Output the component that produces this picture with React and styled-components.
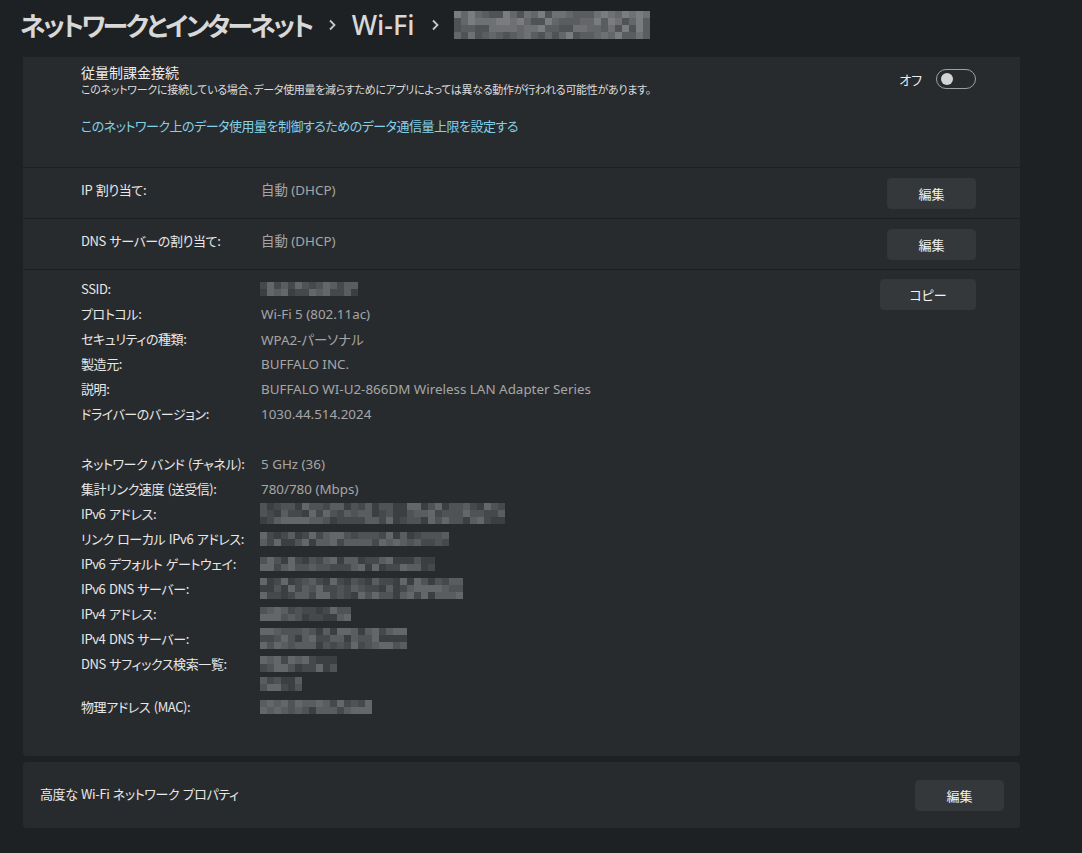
import React from "react"
import styled, { createGlobalStyle } from "styled-components"

const GlobalStyle = createGlobalStyle`
  html, body {
    margin: 0;
    padding: 0;
    background: #1e2124;
  }
  body {
    font-family: "Noto Sans CJK JP", "Noto Sans", sans-serif;
    font-feature-settings: "palt";
    color: #e6e6e6;
    -webkit-font-smoothing: antialiased;
  }
`

const Page = styled.div`
  width: 1082px;
  height: 853px;
  overflow: hidden;
  background: #1e2124;
`

const Header = styled.div`
  height: 57px;
  display: flex;
  align-items: center;
  gap: 15px;
  padding-left: 20px;
  padding-bottom: 8px;
  box-sizing: border-box;
`

const Crumb = styled.span`
  font-family: ${(p) => (p.$latin ? '"Noto Sans", sans-serif' : "inherit")};
  font-size: ${(p) => (p.$latin ? 27 : 26)}px;
  font-weight: ${(p) => (p.$latin ? 500 : 600)};
  color: #d8d8d8;
  letter-spacing: ${(p) => (p.$latin ? "0" : "-2.7px")};
`

const Chevron = () => (
  <svg width="10" height="14" viewBox="0 0 10 14">
    <path d="M3 2.5l4.5 4.5-4.5 4.5" fill="none" stroke="#c8c8c8" strokeWidth="1.8" />
  </svg>
)

const Content = styled.div`
  width: 997px;
  margin-left: 23px;
  display: flex;
  flex-direction: column;
  gap: 6px;
`

const Card = styled.div`
  background: #282b2e;
  border-radius: ${(p) => (p.$top ? "0 0 4px 4px" : "4px")};
`

const Metered = styled.div`
  height: 110px;
  box-sizing: border-box;
  padding: 5px 44px 0 58px;
`

const MeteredTop = styled.div`
  display: flex;
  justify-content: space-between;
  align-items: flex-start;
`

const Title = styled.div`
  font-size: 14px;
  line-height: 20px;
  color: #ececec;
`

const Desc = styled.div`
  font-size: 11px;
  line-height: 14px;
  letter-spacing: -0.3px;
  color: #dcdcdc;
`

const LinkText = styled.div`
  margin-top: 20px;
  font-size: 13px;
  line-height: 20px;
  letter-spacing: -0.5px;
  color: #84d0e8;
`

const ToggleWrap = styled.div`
  display: flex;
  align-items: center;
  gap: 14px;
  margin-top: 7px;
  font-size: 13px;
  color: #ececec;
`

const Toggle = styled.div`
  width: 40px;
  height: 20px;
  box-sizing: border-box;
  border: 1px solid #a0a0a0;
  border-radius: 10px;
  display: flex;
  align-items: center;
  padding-left: 4px;
  &::after {
    content: "";
    width: 12px;
    height: 12px;
    border-radius: 50%;
    background: #d4d4d4;
  }
`

const SettingRow = styled.div`
  height: 51px;
  box-sizing: border-box;
  border-top: 1px solid #1d2023;
  display: grid;
  grid-template-columns: 180px 1fr auto;
  align-items: start;
  padding: 10px 44px 0 58px;
  line-height: 24px;
`

const Label = styled.div`
  font-size: 13px;
  letter-spacing: -0.4px;
  word-spacing: 1px;
  color: #e8e8e8;
`

const Value = styled.div`
  font-family: "Noto Sans", "Noto Sans CJK JP", sans-serif;
  font-size: 13.4px;
  color: #a6a6a6;
`

const Button = styled.button`
  width: ${(p) => p.$w || 89}px;
  height: 31px;
  border: 1px solid #34373a;
  border-radius: 4px;
  background: #35383b;
  color: #f2f2f2;
  font-family: inherit;
  font-feature-settings: "palt";
  font-size: 13px;
  padding: 0;
  margin-top: ${(p) => p.$mt || 0}px;
`

const Details = styled.div`
  height: 487px;
  box-sizing: border-box;
  border-top: 1px solid #1d2023;
  padding: 6px 44px 0 58px;
  display: flex;
  justify-content: space-between;
  align-items: flex-start;
`

const InfoGrid = styled.div`
  display: grid;
  grid-template-columns: 180px auto;
  grid-auto-rows: minmax(25px, auto);
  align-items: start;
`

const Cell = styled.div`
  min-height: 25px;
  display: flex;
  flex-direction: column;
  justify-content: ${(p) => (p.$stack ? "flex-start" : "center")};
  gap: ${(p) => (p.$stack ? "5px" : "0")};
  padding: ${(p) => (p.$stack ? "5px 0 3px" : "0")};
`

const Spacer = styled.div`
  grid-column: 1 / -1;
  height: 25px;
`

const MosaicGrid = styled.div`
  display: grid;
  grid-template-columns: repeat(${(p) => p.$cols}, 7px);
  grid-auto-rows: ${(p) => p.$cell}px;
  width: max-content;
  margin-left: -1px;
`

const Bottom = styled.div`
  height: 66px;
  display: flex;
  align-items: center;
  justify-content: space-between;
  padding: 0 16px 0 17px;
`

const BottomLabel = styled(Label)`
  padding-bottom: 3px;
`

const shades = ["#3c3f42", "#46494c", "#505356", "#5a5d60", "#646669", "#6e7073", "#7a7c7e", "#898a8c"]

function Mosaic({ width, rows = 2, seed = 1, cell = 7, light = 0 }) {
  const cols = Math.round(width / 7)
  let s = seed * 9301 + 49297
  const cells = []
  for (let i = 0; i < cols * rows; i++) {
    s = (s * 9301 + 49297) % 233280
    const r = s / 233280
    const idx = Math.min(shades.length - 1, Math.floor(r * 5) + light)
    cells.push(<span key={i} style={{ background: shades[idx] }} />)
  }
  return (
    <MosaicGrid $cols={cols} $cell={cell}>
      {cells}
    </MosaicGrid>
  )
}

const info = [
  ["SSID:", { w: 96, rows: 2, cell: 7, seed: 3 }],
  ["プロトコル:", "Wi-Fi 5 (802.11ac)"],
  ["セキュリティの種類:", "WPA2-パーソナル"],
  ["製造元:", "BUFFALO INC."],
  ["説明:", "BUFFALO WI-U2-866DM Wireless LAN Adapter Series"],
  ["ドライバーのバージョン:", "1030.44.514.2024"],
  null,
  ["ネットワーク バンド (チャネル):", "5 GHz (36)"],
  ["集計リンク速度 (送受信):", "780/780 (Mbps)"],
  ["IPv6 アドレス:", { w: 245, rows: 3, cell: 7, seed: 7 }],
  ["リンク ローカル IPv6 アドレス:", { w: 189, rows: 2, cell: 7, seed: 11 }],
  ["IPv6 デフォルト ゲートウェイ:", { w: 175, rows: 2, cell: 7, seed: 13 }],
  ["IPv6 DNS サーバー:", { w: 203, rows: 3, cell: 7, seed: 17 }],
  ["IPv4 アドレス:", { w: 91, rows: 2, cell: 7, seed: 19 }],
  ["IPv4 DNS サーバー:", { w: 147, rows: 3, cell: 7, seed: 23 }],
  ["DNS サフィックス検索一覧:", [{ w: 77, rows: 2, cell: 8, seed: 29 }, { w: 42, rows: 2, cell: 7, seed: 31 }]],
  ["物理アドレス (MAC):", { w: 112, rows: 2, cell: 7, seed: 37 }],
]

function renderValue(v) {
  if (typeof v === "string") return <Cell><Value>{v}</Value></Cell>
  if (Array.isArray(v))
    return (
      <Cell $stack>
        {v.map((m, i) => (
          <Mosaic key={i} width={m.w} rows={m.rows} cell={m.cell} seed={m.seed} />
        ))}
      </Cell>
    )
  return (
    <Cell>
      <Mosaic width={v.w} rows={v.rows} cell={v.cell} seed={v.seed} />
    </Cell>
  )
}

export default function App() {
  return (
    <Page>
      <GlobalStyle />
      <Header>
        <Crumb>ネットワークとインターネット</Crumb>
        <Chevron />
        <Crumb $latin>Wi-Fi</Crumb>
        <Chevron />
        <Mosaic width={196} rows={4} cell={7} seed={5} light={2} />
      </Header>
      <Content>
        <Card $top>
          <Metered>
            <MeteredTop>
              <div>
                <Title>従量制課金接続</Title>
                <Desc>
                  このネットワークに接続している場合、データ使用量を減らすためにアプリによっては異なる動作が行われる可能性があります。
                </Desc>
              </div>
              <ToggleWrap>
                オフ
                <Toggle />
              </ToggleWrap>
            </MeteredTop>
            <LinkText>このネットワーク上のデータ使用量を制御するためのデータ通信量上限を設定する</LinkText>
          </Metered>
          <SettingRow>
            <Label>IP 割り当て:</Label>
            <Value>自動 (DHCP)</Value>
            <Button>編集</Button>
          </SettingRow>
          <SettingRow>
            <Label>DNS サーバーの割り当て:</Label>
            <Value>自動 (DHCP)</Value>
            <Button>編集</Button>
          </SettingRow>
          <Details>
            <InfoGrid>
              {info.map((row, i) =>
                row === null ? (
                  <Spacer key={i} />
                ) : (
                  <React.Fragment key={i}>
                    <Cell>
                      <Label>{row[0]}</Label>
                    </Cell>
                    {renderValue(row[1])}
                  </React.Fragment>
                )
              )}
            </InfoGrid>
            <Button $w={96} $mt={3}>コピー</Button>
          </Details>
        </Card>
        <Card>
          <Bottom>
            <BottomLabel>高度な Wi-Fi ネットワーク プロパティ</BottomLabel>
            <Button>編集</Button>
          </Bottom>
        </Card>
      </Content>
    </Page>
  )
}
